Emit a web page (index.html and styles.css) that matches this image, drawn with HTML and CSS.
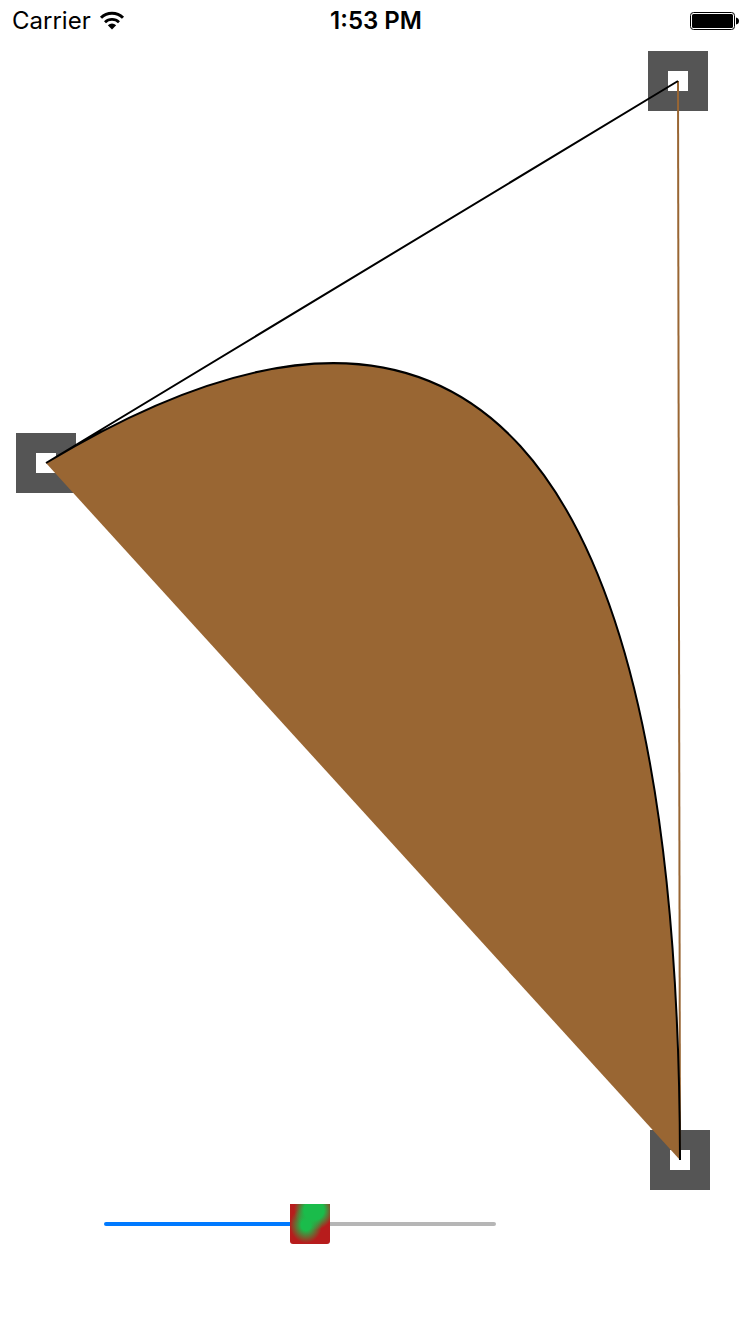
FILE: index.html
```html
<!DOCTYPE html>
<html lang="en">
<head>
<meta charset="utf-8">
<meta name="viewport" content="width=device-width, initial-scale=1">
<title>Curve</title>
<link rel="stylesheet" href="styles.css">
</head>
<body>
<header class="status">
  <div class="status-left">
    <span class="carrier">Carrier</span>
    <svg class="wifi" viewBox="0 0 26 20" aria-hidden="true">
      <path d="M2 6.800A15.500 15.500 0 0 1 24 6.800" fill="none" stroke="#000" stroke-width="3"/>
      <path d="M6 11.200A10 10 0 0 1 20 11.200" fill="none" stroke="#000" stroke-width="2.800"/>
      <path d="M13 18.500L8.800 14.300A6.500 6.500 0 0 1 17.200 14.300Z"/>
    </svg>
  </div>
  <time class="clock">1:53 PM</time>
  <div class="status-right">
    <svg class="battery" viewBox="0 0 50 20" aria-hidden="true">
      <rect x="0.500" y="1.500" width="44" height="17" rx="3" fill="none" stroke="#000"/>
      <rect x="2" y="3" width="41" height="14" rx="1.500"/>
      <path d="M46 6.500Q49 7 49 10T46 13.500Z"/>
    </svg>
  </div>
</header>
<main class="board">
  <svg class="canvas" viewBox="0 42 750 1154" role="img" aria-label="Quadratic curve with three control handles">
    <g fill="#fff" stroke="#555" stroke-width="20">
      <rect x="26" y="443" width="40" height="40"/>
      <rect x="658" y="61" width="40" height="40"/>
      <rect x="660" y="1140" width="40" height="40"/>
    </g>
    <path d="M46 463Q678 81 680 1160Z" fill="#963"/>
    <path d="M678 81L680 1160" stroke="#963" stroke-width="2"/>
    <path d="M46 463L678 81M46 463Q678 81 680 1160" fill="none" stroke="#000" stroke-width="2"/>
  </svg>
</main>
<footer class="controls">
  <input class="slider" type="range" min="0" max="1" step="0.001" value="0.529" aria-label="Curve position">
</footer>
</body>
</html>
```
FILE: styles.css
```css
body {
  margin: 0;
  background: #fff;
  color: #000;
  font-family: Inter, "Liberation Sans", sans-serif;
}
.status {
  display: grid;
  grid-template-columns: 1fr auto 1fr;
  align-items: center;
  height: 42px;
  padding: 0 10px 0 12px;
  font-size: 24px;
  line-height: 42px;
}
.status-left {
  display: flex;
  align-items: center;
  gap: 8px;
}
.status-right {
  display: flex;
  justify-content: flex-end;
}
.clock {
  font-weight: 600;
}
.wifi {
  width: 26px;
  height: 20px;
}
.battery {
  width: 50px;
  height: 20px;
}
.canvas {
  display: block;
  width: 100%;
  height: auto;
}
.controls {
  display: flex;
  padding: 8px 254px 8px 104px;
}
.slider {
  appearance: none;
  flex: 1;
  min-width: 0;
  height: 40px;
  margin: 0;
  background: transparent;
}
.slider::-webkit-slider-runnable-track {
  height: 4px;
  border-radius: 2px;
  background: linear-gradient(to right, #007aff 52%, #b6b6b6 52%);
}
.slider::-webkit-slider-thumb {
  appearance: none;
  width: 40px;
  height: 40px;
  margin-top: -18px;
  border: 0;
  border-radius: 0 0 3px 3px;
  background:
    radial-gradient(ellipse 20px 20px at 24px 6px, #1abc4b 50%, #1abc4b00 100%),
    radial-gradient(ellipse 16px 18px at 16px 21px, #1abc4b 30%, #1abc4b00 100%),
    #b71c1c;
}
```
